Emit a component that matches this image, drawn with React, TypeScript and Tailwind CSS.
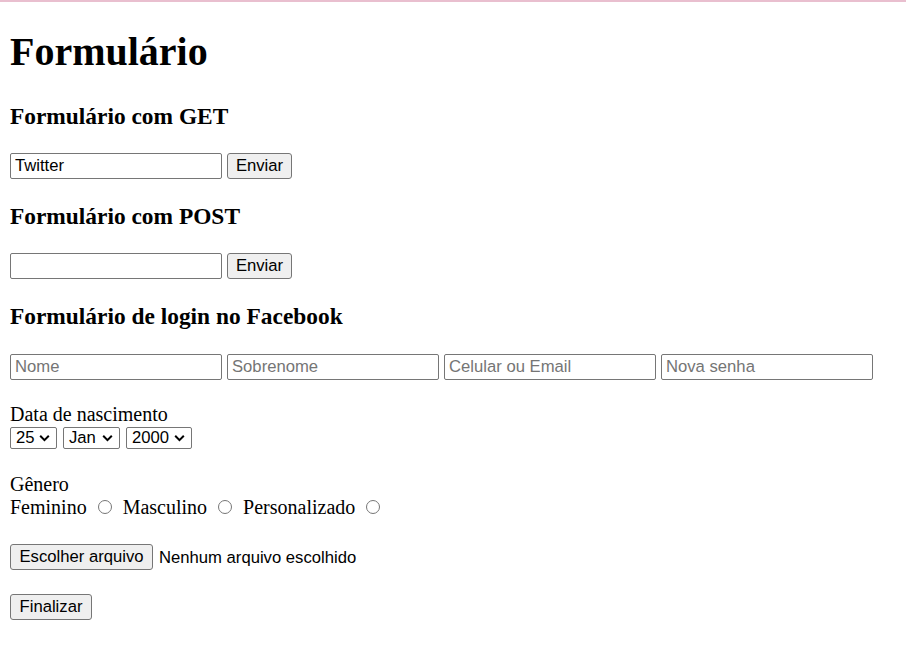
import { useState } from "react";

const inputCls =
  "w-[212px] h-[26px] px-[4px] border border-[#767676] rounded-[2px] bg-white text-black text-[16.67px] font-['Liberation_Sans',Arial,sans-serif] placeholder:text-[#757575] outline-none";

const btnCls =
  "h-[26px] flex items-center justify-center border border-[#767676] rounded-[3px] bg-[#efefef] text-black text-[16.67px] leading-none font-['Liberation_Sans',Arial,sans-serif]";

function FakeSelect({ value, width }: { value: string; width: string }) {
  return (
    <div
      className={`${width} h-[22px] flex items-center justify-between pl-[5px] pr-[6px] border border-[#767676] rounded-[2px] bg-white text-black text-[16.67px] leading-none font-['Liberation_Sans',Arial,sans-serif]`}
    >
      <span>{value}</span>
      <svg width="11" height="8" viewBox="0 0 11 8" fill="none">
        <path d="M1.2 1.8l4.3 4.3 4.3-4.3" stroke="#000" strokeWidth="2" />
      </svg>
    </div>
  );
}

function Radio({ checked, onClick }: { checked: boolean; onClick: () => void }) {
  return (
    <span
      onClick={onClick}
      className="ml-[11px] mr-[11px] shrink-0 w-[14px] h-[14px] rounded-full border border-[#767676] bg-white flex items-center justify-center cursor-pointer"
    >
      {checked && <span className="w-[8px] h-[8px] rounded-full bg-[#0075ff]" />}
    </span>
  );
}

export default function App() {
  const [genero, setGenero] = useState("");

  return (
    <div className="min-h-screen bg-white text-black font-['Liberation_Serif','Times_New_Roman',serif]">
      <div className="h-[2px] bg-[#e9bfcf]" />

      <div className="px-[10px]">
        <h1 className="mt-[27px] text-[40px] leading-[46px] font-bold">Formulário</h1>

        {/* GET */}
        <h3 className="mt-[28px] text-[23.4px] leading-[27px] font-bold">Formulário com GET</h3>
        <form className="mt-[22px] h-[27px] flex items-end gap-[5px]" onSubmit={(e) => e.preventDefault()}>
          <input className={inputCls} defaultValue="Twitter" />
          <button className={`${btnCls} w-[65px]`}>Enviar</button>
        </form>

        {/* POST */}
        <h3 className="mt-[24px] text-[23.4px] leading-[27px] font-bold">Formulário com POST</h3>
        <form className="mt-[22px] h-[27px] flex items-end gap-[5px]" onSubmit={(e) => e.preventDefault()}>
          <input className={inputCls} />
          <button className={`${btnCls} w-[65px]`}>Enviar</button>
        </form>

        {/* Facebook */}
        <h3 className="mt-[24px] text-[23.4px] leading-[27px] font-bold">Formulário de login no Facebook</h3>
        <form onSubmit={(e) => e.preventDefault()}>
          <div className="mt-[23px] h-[27px] flex items-end gap-[5px]">
            <input className={inputCls} placeholder="Nome" />
            <input className={inputCls} placeholder="Sobrenome" />
            <input className={inputCls} placeholder="Celular ou Email" />
            <input className={inputCls} placeholder="Nova senha" type="password" />
          </div>

          <div className="mt-[23px] text-[20px] leading-[23px]">Data de nascimento</div>
          <div className="h-[24px] pt-[1px] flex gap-[6px]">
            <FakeSelect value="25" width="w-[47px]" />
            <FakeSelect value="Jan" width="w-[57px]" />
            <FakeSelect value="2000" width="w-[66px]" />
          </div>

          <div className="mt-[23px] text-[20px] leading-[23px]">Gênero</div>
          <div className="h-[23px] flex items-baseline text-[20px] leading-[23px]">
            <span>Feminino</span>
            <Radio checked={genero === "f"} onClick={() => setGenero("f")} />
            <span>Masculino</span>
            <Radio checked={genero === "m"} onClick={() => setGenero("m")} />
            <span>Personalizado</span>
            <Radio checked={genero === "p"} onClick={() => setGenero("p")} />
          </div>

          <div className="mt-[25px] flex items-center">
            <button type="button" className={`${btnCls} w-[143px]`}>
              Escolher arquivo
            </button>
            <span className="ml-[6px] text-[16.67px] font-['Liberation_Sans',Arial,sans-serif]">
              Nenhum arquivo escolhido
            </span>
          </div>

          <button className={`${btnCls} mt-[24px] w-[82px]`}>Finalizar</button>
        </form>
      </div>
    </div>
  );
}
